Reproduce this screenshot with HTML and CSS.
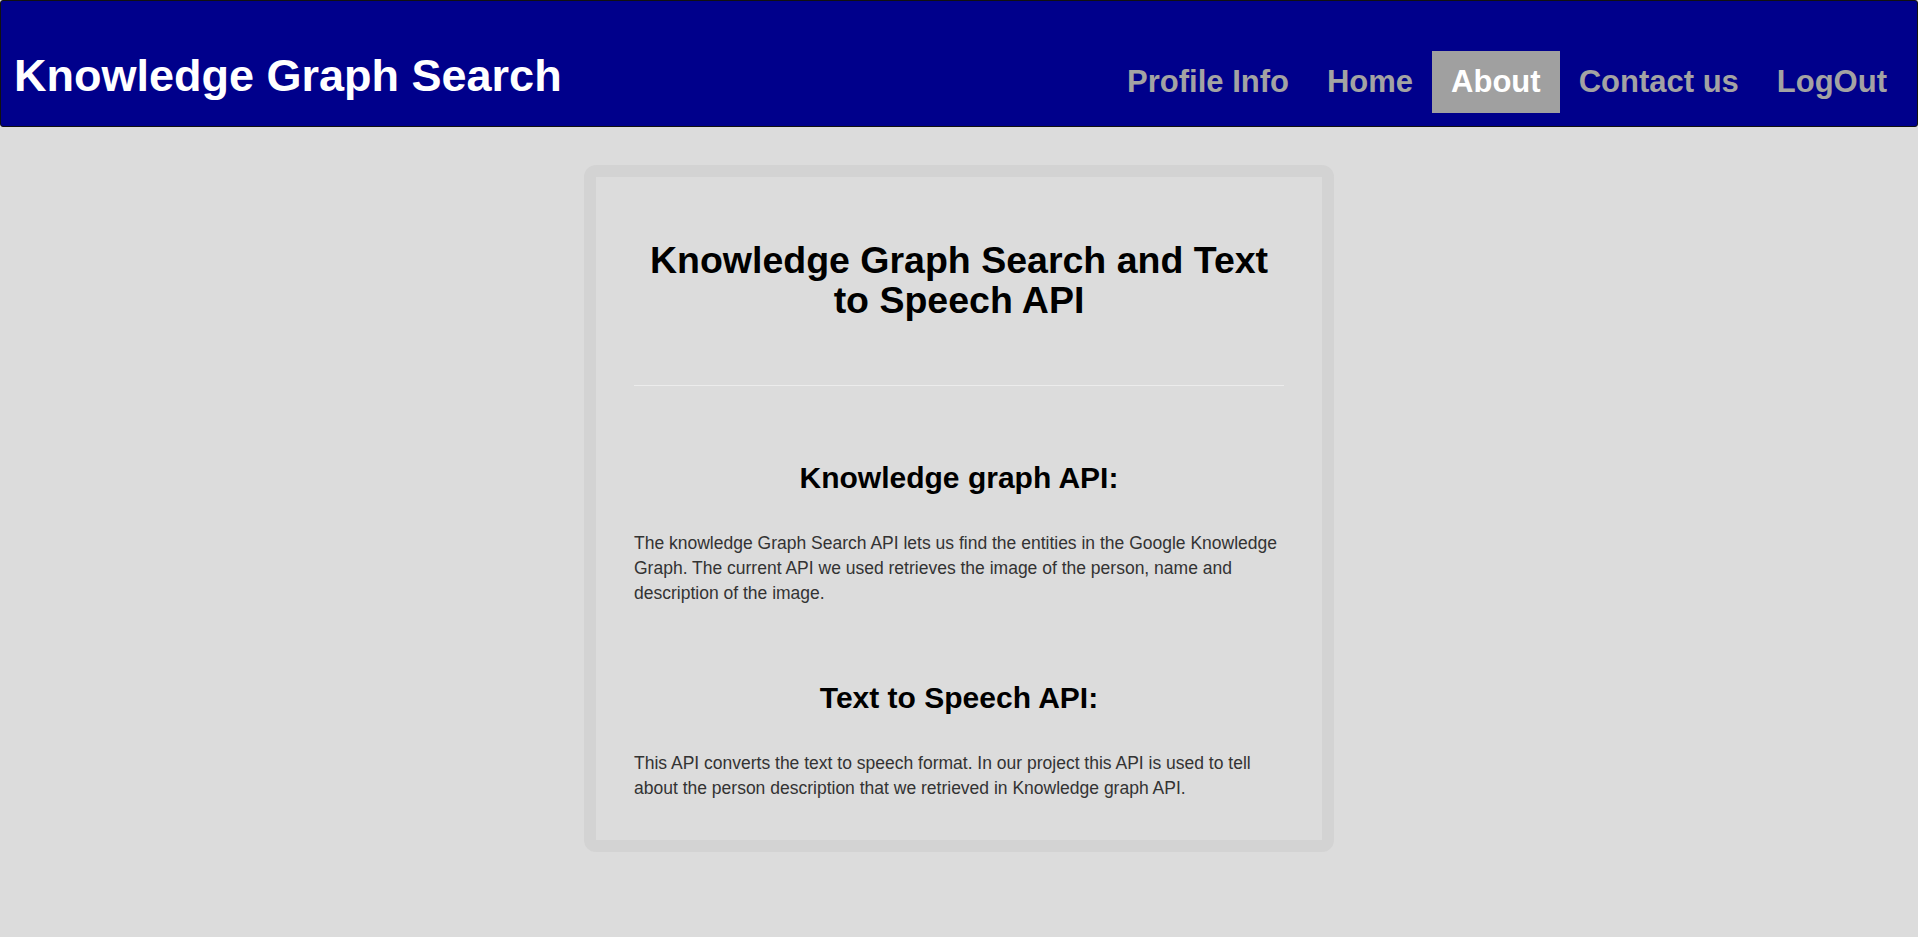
FILE: index.html
```html
<!DOCTYPE html>
<html lang="en">
<head>
<meta charset="utf-8">
<title>About - Knowledge Graph Search</title>
<link rel="stylesheet" href="styles.css">
</head>
<body>
<header class="topbar">
  <h1 class="brand">Knowledge Graph Search</h1>
  <nav class="nav">
    <a class="nav-link" href="#">Profile Info</a>
    <a class="nav-link" href="#">Home</a>
    <a class="nav-link active" href="#">About</a>
    <a class="nav-link" href="#">Contact us</a>
    <a class="nav-link" href="#">LogOut</a>
  </nav>
</header>
<main class="page">
  <section class="card">
    <h1 class="card-title">Knowledge Graph Search and Text to Speech API</h1>
    <hr class="divider">
    <h2 class="section-title first">Knowledge graph API:</h2>
    <p class="section-text">The knowledge Graph Search API lets us find the entities in the Google Knowledge Graph. The current API we used retrieves the image of the person, name and description of the image.</p>
    <h2 class="section-title second">Text to Speech API:</h2>
    <p class="section-text last">This API converts the text to speech format. In our project this API is used to tell about the person description that we retrieved in Knowledge graph API.</p>
  </section>
</main>
</body>
</html>
```
FILE: styles.css
```css
* { box-sizing: border-box; }
html, body {
  margin: 0;
  padding: 0;
  background: #dcdcdc;
  font-family: "Liberation Sans", Arial, sans-serif;
}
.topbar {
  height: 127px;
  background: #00008b;
  border: 1px solid #111;
  border-radius: 3px;
  display: flex;
  justify-content: space-between;
  align-items: flex-end;
  padding: 0 11px 13px 13px;
}
.brand {
  margin: 0 0 11px 0;
  font-size: 45px;
  line-height: 52px;
  font-weight: bold;
  color: #fff;
}
.nav {
  display: flex;
}
.nav-link {
  display: block;
  padding: 13px 19px;
  font-size: 31px;
  line-height: 36px;
  font-weight: bold;
  color: #a3a3a3;
  text-decoration: none;
}
.nav-link.active {
  background: #a0a0a0;
  color: #fff;
}
.page {
  padding-top: 38px;
  display: flex;
  justify-content: center;
}
.card {
  width: 750px;
  background: #dcdcdc;
  border: 12px solid #d3d3d3;
  border-radius: 12px;
  padding: 63px 38px 39px 38px;
}
.card-title {
  margin: 0;
  text-align: center;
  font-size: 37.5px;
  line-height: 40px;
  font-weight: bold;
  color: #000;
}
.divider {
  margin: 65px 0 0 0;
  border: 0;
  border-top: 1px solid #ececec;
  height: 0;
}
.section-title {
  margin: 0;
  text-align: center;
  font-size: 30px;
  line-height: 35px;
  font-weight: bold;
  color: #000;
}
.section-title.first { margin-top: 74px; }
.section-title.second { margin-top: 74px; }
.section-text {
  margin: 36px 0 0 0;
  font-size: 17.5px;
  line-height: 25px;
  color: #333;
}
```
